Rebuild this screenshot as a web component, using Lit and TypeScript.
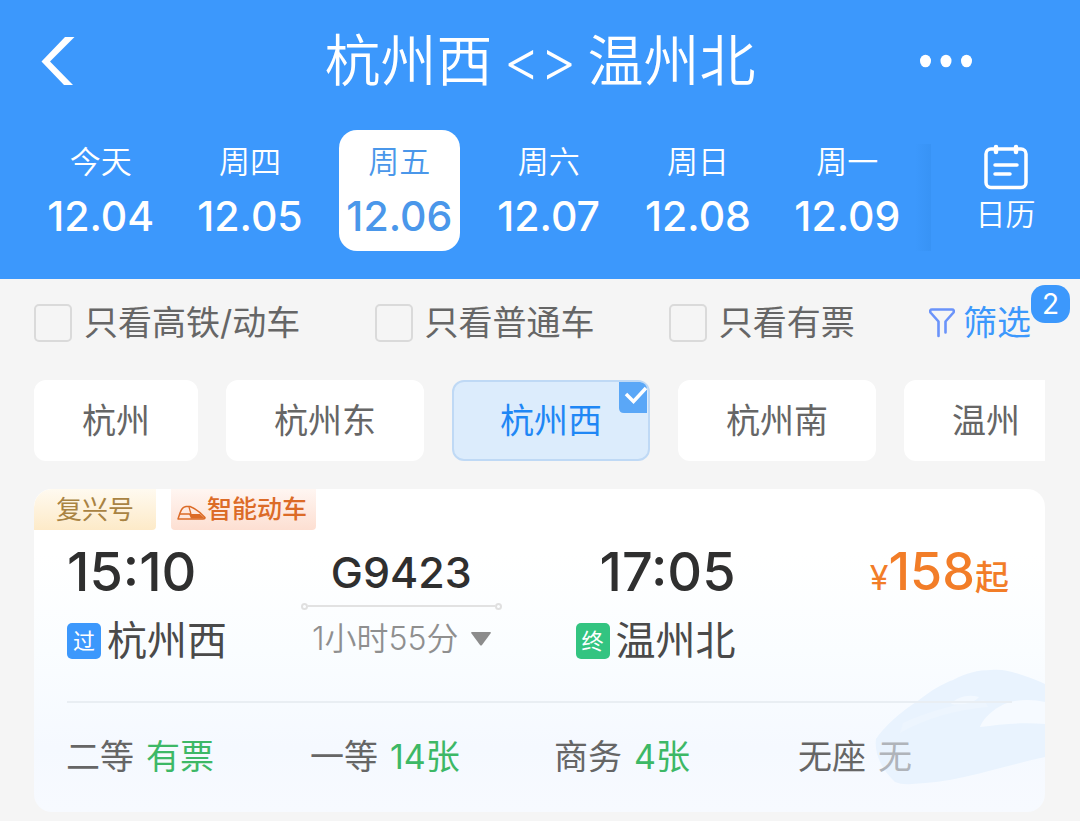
import { LitElement, html, css, nothing } from "lit";
import { customElement, state } from "lit/decorators.js";
import { classMap } from "lit/directives/class-map.js";

interface Day {
  name: string;
  date: string;
}

interface Seat {
  kind: string;
  left: string;
  soldOut?: boolean;
}

const DAYS: Day[] = [
  { name: "今天", date: "12.04" },
  { name: "周四", date: "12.05" },
  { name: "周五", date: "12.06" },
  { name: "周六", date: "12.07" },
  { name: "周日", date: "12.08" },
  { name: "周一", date: "12.09" },
];

const FILTERS = ["只看高铁/动车", "只看普通车", "只看有票"];

const STATIONS = ["杭州", "杭州东", "杭州西", "杭州南", "温州"];

const SEATS: Seat[] = [
  { kind: "二等", left: "有票" },
  { kind: "一等", left: "14张" },
  { kind: "商务", left: "4张" },
  { kind: "无座", left: "无", soldOut: true },
];

@customElement("train-card")
export class TrainCard extends LitElement {
  static styles = css`
    :host {
      display: block;
    }
    .card {
      position: relative;
      overflow: hidden;
      border-radius: 18px;
      background: linear-gradient(#ffffff 20%, #fafdff 50%, #f5f9ff 80%, #f7faff);
    }
    .watermark {
      position: absolute;
      right: 0;
      bottom: 26px;
      width: 175px;
      height: 125px;
    }
    .content {
      position: relative;
    }
    .tags {
      display: flex;
      gap: 15px;
      font-size: 26px;
      line-height: 41px;
    }
    .tag {
      display: flex;
      align-items: center;
      border-radius: 0 0 4px 4px;
    }
    .series {
      padding: 0 22px;
      color: #a98342;
      background: linear-gradient(#fffaf0, #fdeac8);
      border-radius: 18px 0 4px 0;
    }
    .smart {
      gap: 1px;
      padding: 0 9px 0 6px;
      font-size: 25px;
      font-weight: 500;
      color: #dc6b27;
      background: linear-gradient(#fff6f2, #fddfd2);
    }
    .train {
      width: 29px;
      height: 15px;
      margin-top: 6px;
    }
    .trip {
      display: grid;
      grid-template-columns: 234fr 202fr 234fr 274fr;
      padding: 14px 36px 37px 33px;
    }
    .stop,
    .middle {
      display: flex;
      flex-direction: column;
    }
    .stop {
      gap: 18px;
    }
    .arrive {
      align-items: flex-end;
    }
    .time {
      font-size: 54px;
      font-weight: 500;
      line-height: 56px;
      color: #2f2f2f;
    }
    .station {
      display: flex;
      align-items: center;
      gap: 6px;
      font-size: 40px;
      line-height: 46px;
      color: #4a4a4a;
    }
    .mark {
      width: 34px;
      border-radius: 5px;
      background: #3c98fc;
      color: #fff;
      font-size: 22px;
      line-height: 36px;
      text-align: center;
    }
    .end {
      background: #33c481;
    }
    .middle {
      align-items: center;
    }
    .number {
      font-size: 43px;
      font-weight: 450;
      line-height: 56px;
      color: #2f2f2f;
    }
    .track {
      display: flex;
      align-items: center;
      width: 100%;
      height: 12px;
    }
    .track::before,
    .track::after {
      content: "";
      width: 3px;
      height: 3px;
      border: 2px solid #e0e0e0;
      border-radius: 50%;
    }
    .rule {
      flex: 1;
      height: 2px;
      background: #e2e2e2;
    }
    .duration {
      display: flex;
      align-items: center;
      gap: 12px;
      padding: 4px 0 0;
      border: 0;
      background: none;
      font: inherit;
      font-size: 32px;
      font-weight: 350;
      line-height: 46px;
      color: #8f8f8f;
    }
    .caret {
      width: 20px;
      height: 14px;
    }
    .price {
      justify-self: end;
      font-size: 52px;
      font-weight: 500;
      line-height: 56px;
      color: #f27d28;
    }
    .yen,
    .from {
      font-size: 34px;
    }
    .yen {
      font-weight: 400;
    }
    .seats {
      display: grid;
      grid-template-columns: repeat(4, 1fr);
      margin: 0 3px 0 32px;
      padding: 30px 0 31px;
      list-style: none;
      font-size: 34px;
      line-height: 48px;
      color: #666;
    }
    .divider {
      height: 2px;
      margin: 0 33px;
      background: #e9eef3;
    }
    .seat {
      display: flex;
      gap: 12px;
    }
    .left {
      color: #3db866;
    }
    .none {
      color: #b0b4ba;
    }
  `;

  render() {
    return html`
      <article class="card">
        <svg class="watermark" viewBox="0 0 175 125" aria-hidden="true">
          <path
            d="M25 121C13 110 4 94 6 78C14 66 30 51 49 39C62 29 72 23 83 19C96 12 108 9 121 9C134 8 143 11 152 14C161 17 169 20 175 23V96C148 102 120 110 94 116C76 120 60 122 42 123Q32 124 25 121Z"
            fill="#e9f3fe"
          />
          <path d="M33 62C58 50 88 43 114 39L118 46C90 48 58 56 30 72Z" fill="#edf5fe" />
          <path d="M81 43C87 36 98 33 109 36C105 41 94 45 81 43Z" fill="#f2f8ff" />
          <path d="M110 66C114 55 130 42 145 40C156 38 167 39 175 41V63C154 61 132 63 110 66Z" fill="#f6faff" />
        </svg>
        <div class="content">
          <div class="tags">
            <span class="tag series">复兴号</span>
            <span class="tag smart">
              <svg class="train" viewBox="0 0 29 15" aria-hidden="true">
                <path
                  d="M1 14L3 8Q5 2 9 1.500H13Q20 4 28 12.500Q28 14 26 14Z"
                  fill="none"
                  stroke="#dc6b27"
                  stroke-width="1.500"
                  stroke-linejoin="round"
                />
                <path d="M3 9H14M12 2L14 9" fill="none" stroke="#dc6b27" stroke-width="1.300" />
                <path d="M12 9H23L28 13.500H14Z" fill="#dc6b27" />
              </svg>
              智能动车
            </span>
          </div>
          <div class="trip">
            <div class="stop">
              <time class="time">15:10</time>
              <span class="station"><span class="mark">过</span>杭州西</span>
            </div>
            <div class="middle">
              <span class="number">G9423</span>
              <span class="track"><span class="rule"></span></span>
              <button class="duration" type="button">
                1小时55分
                <svg class="caret" viewBox="0 0 20 14" aria-hidden="true">
                  <path d="M1 0H19Q20.500 0 19.500 1.500L11 13Q10 14 9 13L0.500 1.500Q-0.500 0 1 0Z" fill="#8c8c8c" />
                </svg>
              </button>
            </div>
            <div class="stop arrive">
              <time class="time">17:05</time>
              <span class="station"><span class="mark end">终</span>温州北</span>
            </div>
            <div class="price"><span class="yen">¥</span>158<span class="from">起</span></div>
          </div>
          <div class="divider"></div>
          <ul class="seats">
            ${SEATS.map(
              (s) => html`<li class="seat">
                <span>${s.kind}</span>
                <span class=${classMap({ left: !s.soldOut, none: !!s.soldOut })}>${s.left}</span>
              </li>`
            )}
          </ul>
        </div>
      </article>
    `;
  }
}

@customElement("app-root")
export class AppRoot extends LitElement {
  static styles = css`
    :host {
      display: block;
      min-height: 100vh;
      background: #f5f5f5;
      font-family: Inter, "Noto Sans CJK SC", sans-serif;
    }
    button {
      border: 0;
      padding: 0;
      background: none;
      font: inherit;
      color: inherit;
    }
    .header {
      padding: 24px 0 28px;
      background: #3c98fc;
      color: #fff;
    }
    .bar {
      display: grid;
      grid-template-columns: 1fr auto 1fr;
      align-items: center;
      padding: 0 41px;
    }
    .back {
      justify-self: start;
      width: 34px;
      height: 48px;
    }
    .more {
      justify-self: end;
      width: 54px;
      height: 14px;
      margin-right: 66px;
    }
    .icon {
      display: block;
      width: 100%;
      height: 100%;
    }
    .title {
      display: flex;
      gap: 11px;
      margin: 0;
      font-size: 56px;
      font-weight: 350;
      line-height: 74px;
    }
    .dates {
      display: flex;
      padding-top: 32px;
    }
    .days {
      flex: 1;
      display: grid;
      grid-template-columns: repeat(6, 1fr);
      justify-items: center;
      padding: 0 9px 0 26px;
    }
    .day {
      display: flex;
      flex-direction: column;
      align-items: center;
      width: 121px;
      padding: 8px 0 5px;
      border-radius: 18px;
    }
    .chosen {
      background: #fff;
      color: #4a97ea;
    }
    .weekday {
      font-size: 31px;
      font-weight: 350;
      line-height: 48px;
    }
    .date {
      font-size: 41px;
      font-weight: 450;
      line-height: 60px;
    }
    .calendar {
      display: flex;
      flex-direction: column;
      align-items: center;
      width: 149px;
      padding-top: 14px;
      font-size: 30px;
      font-weight: 350;
      line-height: 48px;
    }
    .shade {
      width: 16px;
      margin: 14px 0 0 -16px;
      background: linear-gradient(90deg, #3c98fc, #3893f5);
    }
    .calendar-icon {
      width: 44px;
      height: 46px;
    }
    .filters {
      display: flex;
      align-items: center;
      justify-content: space-between;
      padding: 20px 49px 0 34px;
      font-size: 34px;
      line-height: 48px;
      color: #666;
    }
    .option {
      display: flex;
      align-items: center;
      gap: 12px;
    }
    .box {
      appearance: none;
      width: 38px;
      height: 38px;
      margin: 0;
      border: 2px solid #dadada;
      border-radius: 5px;
    }
    .box:checked {
      background: #3c98fc;
    }
    .filter {
      display: flex;
      align-items: center;
      gap: 8px;
      color: #3c98fc;
    }
    .filter-text {
      position: relative;
    }
    .funnel {
      width: 26px;
      height: 30px;
    }
    .count {
      position: absolute;
      left: 100%;
      top: -14px;
      width: 39px;
      border-radius: 14px;
      background: #3c98fc;
      color: #fff;
      font-size: 28px;
      line-height: 38px;
    }
    .main {
      padding: 0 35px 9px 34px;
    }
    .chips {
      display: flex;
      gap: 28px;
      overflow: hidden;
      padding: 33px 0 28px;
    }
    .chip {
      position: relative;
      flex: none;
      padding: 16px 46px;
      border: 2px solid #fff;
      border-radius: 12px;
      background: #fff;
      color: #666;
      font-size: 34px;
      line-height: 45px;
    }
    .picked {
      border-color: #bfd9f5;
      background: #dcecfc;
      color: #1f87f5;
    }
    .tick {
      position: absolute;
      top: 0;
      right: 1px;
      width: 28px;
      height: 31px;
    }
  `;

  @state() private day = 2;
  @state() private station = 2;

  render() {
    return html`
      <header class="header">
        <div class="bar">
          <button class="back" type="button" aria-label="返回">
            <svg class="icon" viewBox="0 0 34 48" aria-hidden="true">
              <path d="M24 0H33.500L9 24.500L32 48H23L0.500 24.500Z" fill="#fff" />
            </svg>
          </button>
          <h1 class="title"><span>杭州西</span><span>&lt;&gt;</span><span>温州北</span></h1>
          <button class="more" type="button" aria-label="更多">
            <svg class="icon" viewBox="0 0 54 14" aria-hidden="true">
              <g fill="#fff">
                <ellipse cx="6.500" cy="7" rx="5.500" ry="6.300" />
                <ellipse cx="27" cy="7" rx="5.500" ry="6.300" />
                <ellipse cx="47.500" cy="7" rx="5.500" ry="6.300" />
              </g>
            </svg>
          </button>
        </div>
        <div class="dates">
          <div class="days">
            ${DAYS.map(
              (d, i) => html`<button
                type="button"
                class=${classMap({ day: true, chosen: i === this.day })}
                @click=${() => (this.day = i)}
              >
                <span class="weekday">${d.name}</span><span class="date">${d.date}</span>
              </button>`
            )}
          </div>
          <div class="shade"></div>
          <button class="calendar" type="button">
            <svg class="calendar-icon" viewBox="0 0 44 46" aria-hidden="true">
              <g fill="none" stroke="#fff" stroke-linecap="round">
                <rect x="2" y="5" width="40" height="38.500" rx="5" stroke-width="3.500" />
                <path d="M12 3V8M32 3V8" stroke-width="4.500" />
                <path d="M11 21H33M11 30H26" stroke-width="3.500" />
              </g>
            </svg>
            日历
          </button>
        </div>
      </header>
      <div class="filters">
        ${FILTERS.map((f) => html`<label class="option"><input class="box" type="checkbox" />${f}</label>`)}
        <button class="filter" type="button">
          <svg class="funnel" viewBox="0 0 26 30" aria-hidden="true">
            <path
              d="M9.500 28V13.500L1.500 4.500Q0.500 1.500 3 1.500H23Q25.500 1.500 24.500 4.500L16.500 13.500V24.500"
              fill="none"
              stroke="#6a93fa"
              stroke-width="2.600"
              stroke-linecap="round"
              stroke-linejoin="round"
            />
          </svg>
          <span class="filter-text">筛选<span class="count">2</span></span>
        </button>
      </div>
      <main class="main">
        <div class="chips">
          ${STATIONS.map(
            (s, i) => html`<button
              type="button"
              aria-pressed=${i === this.station}
              class=${classMap({ chip: true, picked: i === this.station })}
              @click=${() => (this.station = i)}
            >
              ${s}${i === this.station
                ? html`<svg class="tick" viewBox="0 0 28 31" aria-hidden="true">
                    <path d="M0 0H21Q28 1 28 8V31H5Q0 31 0 26Z" fill="#5aa7f7" />
                    <path d="M7 12L14.500 19.500L27 6" fill="none" stroke="#fff" stroke-width="3.500" />
                  </svg>`
                : nothing}
            </button>`
          )}
        </div>
        <train-card></train-card>
      </main>
    `;
  }
}
